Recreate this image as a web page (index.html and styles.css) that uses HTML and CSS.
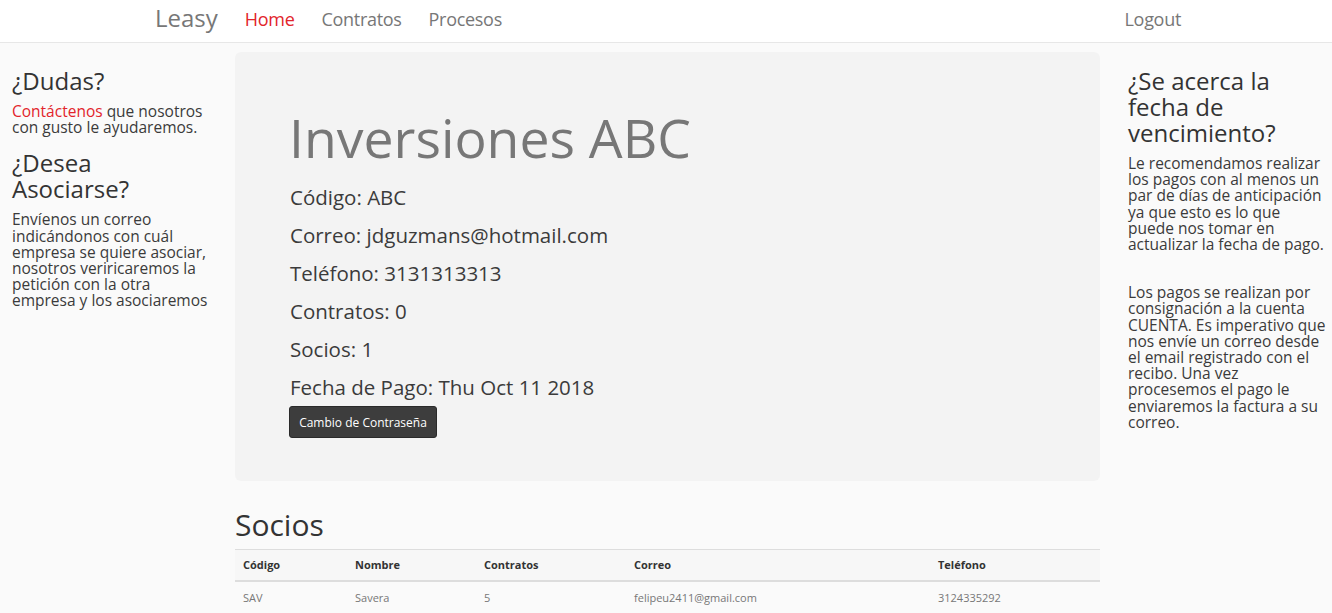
FILE: index.html
```html
<!DOCTYPE html>
<html lang="es">
<head>
<meta charset="utf-8">
<title>Leasy</title>
<link rel="stylesheet" href="styles.css">
</head>
<body>
<nav class="navbar">
  <div class="nav-left">
    <a class="brand" href="#">Leasy</a>
    <a class="nav-link active" href="#">Home</a>
    <a class="nav-link" href="#">Contratos</a>
    <a class="nav-link" href="#">Procesos</a>
  </div>
  <a class="nav-link logout" href="#">Logout</a>
</nav>
<div class="layout">
  <aside class="side side-left">
    <h3 class="side-title">¿Dudas?</h3>
    <p class="side-text"><a class="red" href="#">Contáctenos</a> que nosotros con gusto le ayudaremos.</p>
    <h3 class="side-title second">¿Desea Asociarse?</h3>
    <p class="side-text">Envíenos un correo indicándonos con cuál empresa se quiere asociar, nosotros veriricaremos la petición con la otra empresa y los asociaremos</p>
  </aside>
  <main class="main">
    <section class="jumbotron">
      <h1 class="company">Inversiones ABC</h1>
      <p class="info">Código: ABC</p>
      <p class="info">Correo: jdguzmans@hotmail.com</p>
      <p class="info">Teléfono: 3131313313</p>
      <p class="info">Contratos: 0</p>
      <p class="info">Socios: 1</p>
      <p class="info">Fecha de Pago: Thu Oct 11 2018</p>
      <button class="btn-dark">Cambio de Contraseña</button>
    </section>
    <h2 class="section-title">Socios</h2>
    <table class="table">
      <thead>
        <tr>
          <th class="c1">Código</th>
          <th class="c2">Nombre</th>
          <th class="c3">Contratos</th>
          <th class="c4">Correo</th>
          <th class="c5">Teléfono</th>
        </tr>
      </thead>
      <tbody>
        <tr>
          <td>SAV</td>
          <td>Savera</td>
          <td>5</td>
          <td>felipeu2411@gmail.com</td>
          <td>3124335292</td>
        </tr>
      </tbody>
    </table>
  </main>
  <aside class="side side-right">
    <h3 class="side-title">¿Se acerca la fecha de vencimiento?</h3>
    <p class="side-text">Le recomendamos realizar los pagos con al menos un par de días de anticipación ya que esto es lo que puede nos tomar en actualizar la fecha de pago.</p>
    <p class="side-text spaced">Los pagos se realizan por consignación a la cuenta CUENTA. Es imperativo que nos envíe un correo desde el email registrado con el recibo. Una vez procesemos el pago le enviaremos la factura a su correo.</p>
  </aside>
</div>
</body>
</html>
```
FILE: styles.css
```css
* { box-sizing: border-box; }
html, body { margin: 0; padding: 0; }
body {
  font-family: "Open Sans", "Noto Sans", sans-serif;
  background: #fafafa;
  color: #3b3b3b;
  overflow: hidden;
}
a { text-decoration: none; }

.navbar {
  height: 43px;
  background: #ffffff;
  border-bottom: 1px solid #e7e7e7;
  display: flex;
  align-items: center;
  justify-content: space-between;
  padding: 0 151px 5px 155px;
}
.nav-left { display: flex; align-items: center; }
.brand {
  font-size: 24px;
  color: #777;
  margin-right: 27px;
  line-height: 1;
  margin-top: -1px;
}
.nav-link {
  font-size: 18px;
  color: #777;
  margin-right: 27px;
  line-height: 1;
  letter-spacing: -0.3px;
}
.nav-link.active { color: #e2242b; }
.nav-link.logout { margin-right: 0; }

.layout {
  display: grid;
  grid-template-columns: 222px 888px 222px;
}
.side-left { padding: 0 12px 0 12px; }
.side-right { padding: 0 2px 0 18px; }
.side-title {
  font-size: 24px;
  font-weight: 400;
  line-height: 26px;
  margin: 25px 0 9px;
  color: #333;
}
.side-title.second { margin-top: 15px; }
.side-text {
  font-size: 15.5px;
  line-height: 16.2px;
  margin: 0;
  color: #3b3b3b;
}
.side-text.spaced { margin-top: 32px; }
.red { color: #e2242b; }

.main { padding: 9px 10px 0 13px; }
.jumbotron {
  background: #f3f3f3;
  border-radius: 6px;
  padding: 55px 60px 43px 55px;
  height: 429px;
}
.company {
  font-size: 53.5px;
  font-weight: 400;
  line-height: 62px;
  color: #777;
  margin: 0 0 14px -1px;
}
.info {
  font-size: 20.5px;
  line-height: 28px;
  margin: 0 0 10px;
  color: #3b3b3b;
}
.info:last-of-type { margin-bottom: 5px; }
.btn-dark {
  font-family: "Open Sans", "Noto Sans", sans-serif;
  font-size: 12px;
  color: #fff;
  background: #3d3d3d;
  border: 1px solid #2a2a2a;
  border-radius: 3px;
  height: 32px;
  width: 148px;
  padding: 0;
  margin-left: -1px;
}

.section-title {
  font-size: 30px;
  font-weight: 400;
  line-height: 33px;
  margin: 27px 0 8px;
  color: #333;
}
.table {
  width: 100%;
  border-collapse: collapse;
  font-size: 11px;
}
.table th, .table td {
  text-align: left;
  padding: 0 8px;
}
.table th {
  height: 31px;
  border-top: 1px solid #ddd;
  border-bottom: 2px solid #ddd;
  font-weight: 700;
  color: #333;
  background: #f7f7f7;
}
.table td {
  height: 32px;
  color: #777;
}
.c1 { width: 112px; }
.c2 { width: 129px; }
.c3 { width: 150px; }
.c4 { width: 304px; }
.c5 { width: 170px; }
```
